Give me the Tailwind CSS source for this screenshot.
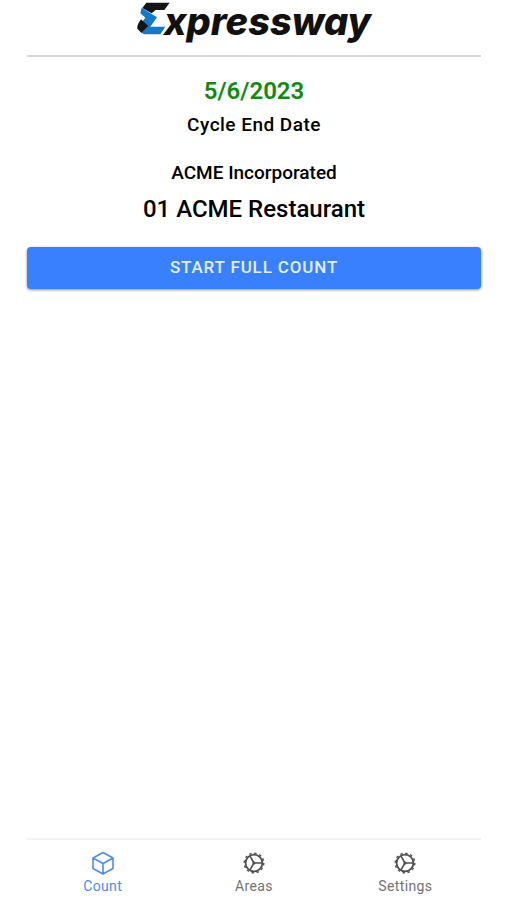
<!DOCTYPE html>
<html lang="en">

<head>
    <meta charset="UTF-8">
    <meta name="viewport" content="width=device-width, initial-scale=1.0">
    <title>Expressway</title>
    <script src="https://cdn.jsdelivr.net/npm/@tailwindcss/browser@4"></script>
</head>

<body class="bg-white font-[Roboto,sans-serif] text-black">
    <div class="flex flex-col min-h-screen pl-[27px] pr-[25px]">

        <header class="flex justify-center h-[57px] border-b-2 border-[#d8d8d8]">
            <h1 class="flex items-start text-[#111] font-[Inter,sans-serif] text-[38px] leading-[42px] font-extrabold italic">
                <svg class="w-[33px] h-[33px] mt-[2px] -mr-[6px]" viewBox="36 4 99 99" role="img" aria-label="E">
                    <path d="M52 22 L64 6 H134 L118 28 H92 L80 38 Z" fill="#151515" />
                    <path d="M50 21 L96 50 L86 64 L76 78 H121 L106 101 H57 L47 95 L68 76 L48 68 L61 51 L46 38 Z" fill="#1478cc" />
                    <path d="M48 56 L70 76 L49 96 L37 84 Q35 74 48 56 Z" fill="#151515" />
                </svg>
                <span>xpressway</span>
            </h1>
        </header>

        <main class="flex-1 text-center font-medium">
            <p class="mt-5 text-2xl leading-7 font-semibold text-[#108a10]">5/6/2023</p>
            <p class="mt-2 text-[19px] leading-6 tracking-wide">Cycle End Date</p>
            <p class="mt-6 text-[19px] leading-6">ACME Incorporated</p>
            <h2 class="mt-2 text-2xl leading-8">01 ACME Restaurant</h2>
            <button type="button"
                class="block w-full h-[42px] mt-[22px] rounded-sm bg-[#3880ff] text-[17px] font-medium tracking-wider text-[#e4f0ff] shadow-[0_1px_3px_rgba(0,0,0,0.45)]">START FULL COUNT</button>
        </main>

        <nav class="grid grid-cols-3 h-[62px] border-t-2 border-[#f3f3f3] text-sm leading-4 tracking-wide text-[#737373]">
            <a href="#count" class="flex flex-col items-center pt-[11px] gap-[3px] text-[#4f8bf5]">
                <svg class="w-6 h-6" viewBox="0 0 24 24" fill="none" stroke="currentColor" stroke-width="1.6" stroke-linejoin="round" stroke-linecap="round">
                    <path d="M12 1.5 L22 7 V17.5 L12 23 L2 17.5 V7 Z M2 7 L12 12.5 L22 7 M12 12.5 V23" />
                </svg>
                Count
            </a>
            <a href="#areas" class="flex flex-col items-center pt-[11px] gap-[3px]">
                <svg class="w-6 h-6 text-[#505050]" viewBox="0 0 24 24" fill="none" stroke="currentColor">
                    <circle cx="12" cy="12" r="8.4" stroke-width="1.8" />
                    <circle cx="12" cy="12" r="9.8" stroke-width="1.4" stroke-dasharray="2.4 2.73" />
                    <path d="M12 12 H20 M12 12 L8 5.2 M12 12 L8 18.8" stroke-width="1.6" />
                    <circle cx="12" cy="12" r="1.6" fill="currentColor" stroke="none" />
                </svg>
                Areas
            </a>
            <a href="#settings" class="flex flex-col items-center pt-[11px] gap-[3px]">
                <svg class="w-6 h-6 text-[#505050]" viewBox="0 0 24 24" fill="none" stroke="currentColor">
                    <circle cx="12" cy="12" r="8.4" stroke-width="1.8" />
                    <circle cx="12" cy="12" r="9.8" stroke-width="1.4" stroke-dasharray="2.4 2.73" />
                    <path d="M12 12 H20 M12 12 L8 5.2 M12 12 L8 18.8" stroke-width="1.6" />
                    <circle cx="12" cy="12" r="1.6" fill="currentColor" stroke="none" />
                </svg>
                Settings
            </a>
        </nav>
    </div>
</body>

</html>
